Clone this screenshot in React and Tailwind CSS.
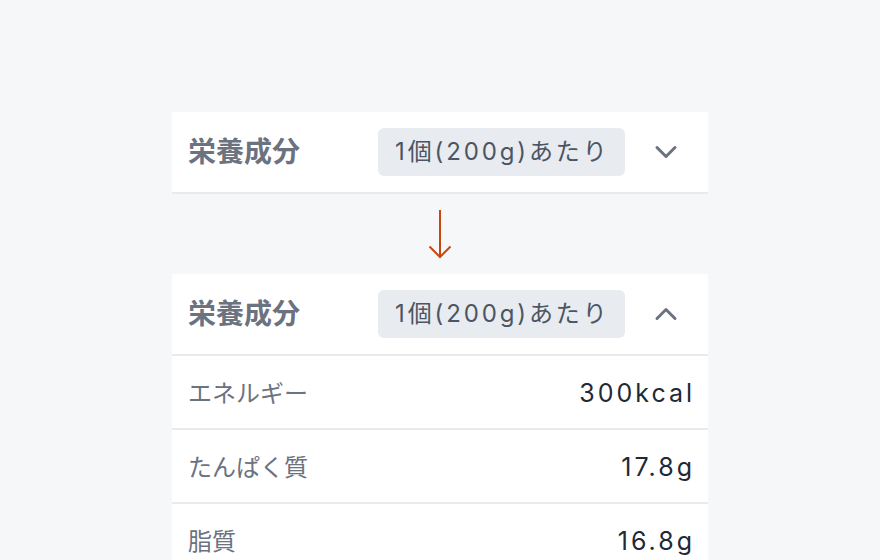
import { ChevronDown, ChevronUp } from 'lucide-react';

const font = { fontFamily: 'Inter, "Noto Sans CJK JP", sans-serif' };

const rows = [
  { label: 'エネルギー', value: '300kcal' },
  { label: 'たんぱく質', value: '17.8g' },
  { label: '脂質', value: '16.8g' },
  { label: '炭水化物', value: '21.4g' },
];

function Header({ open }) {
  const Icon = open ? ChevronUp : ChevronDown;
  return (
    <div className="flex h-[82px] items-center border-b-2 border-[#e8eaee] pl-4 pr-[18px]">
      <h2 className="w-[190px] text-[28px] font-bold text-[#6b7280]">栄養成分</h2>
      <span className="flex h-[48px] items-center rounded-md bg-[#e8ebef] pl-[17px] pr-[15px] text-[24px] tracking-[0.12em] text-[#4b5563]">
        1個(200g)あたり
      </span>
      <button type="button" className="ml-auto flex h-[48px] w-[48px] items-center justify-center text-[#6b7280]">
        <Icon className="h-9 w-9" strokeWidth={2} />
      </button>
    </div>
  );
}

export default function App() {
  return (
    <div className="h-[560px] overflow-hidden bg-[#f6f7f9] pt-[112px]" style={font}>
      <div className="mx-auto w-[536px]">
        <section className="bg-white">
          <Header open={false} />
        </section>
        <div className="flex h-[80px] items-center justify-center">
          <svg width="24" height="50" viewBox="0 0 24 50" fill="none" stroke="#c9470c" strokeWidth="2">
            <path d="M12 1v47" />
            <path d="M1.5 37.5 12 48l10.5-10.5" />
          </svg>
        </div>
        <section className="bg-white">
          <Header open />
          {rows.map((r) => (
            <div key={r.label} className="flex h-[74px] items-center justify-between border-b-2 border-[#e8eaee] px-4">
              <span className="pt-[3px] text-[24px] text-[#6b7280]">{r.label}</span>
              <span className="mr-[-3px] pt-[3px] text-[25px] tracking-[0.12em] text-[#1f2937]">{r.value}</span>
            </div>
          ))}
        </section>
      </div>
    </div>
  );
}
